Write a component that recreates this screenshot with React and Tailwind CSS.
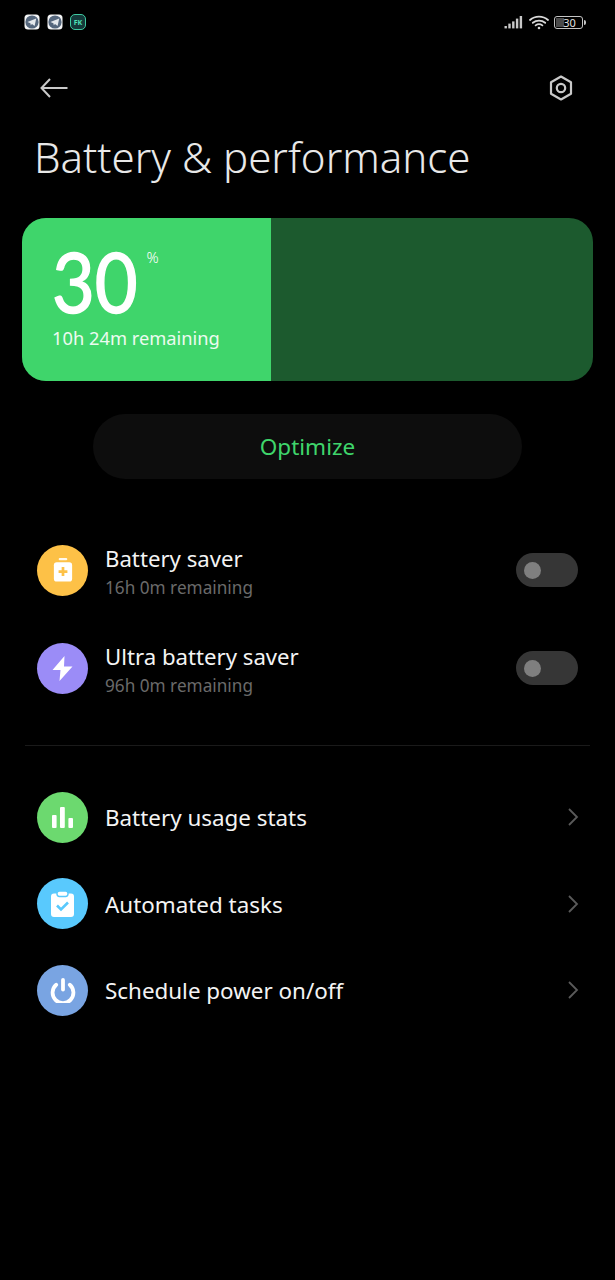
import React from 'react';

// App icons in the status bar
function TelegramNotif() {
    return (
        <svg width="16" height="16" viewBox="0 0 16 16">
            <rect x="0.5" y="0.5" width="15" height="15" rx="3.5" fill="#f4f5f6" />
            <circle cx="8" cy="8" r="6.6" fill="#55677d" />
            <path d="M3.4 8 L12.2 4.4 L10.6 12 L8 10 L6.8 11.2 L6.4 9.2 Z" fill="#e4e8ec" />
        </svg>
    );
}

function FkNotif() {
    return (
        <div className="w-4 h-4 rounded-[5px] border border-[#3fc9a0] bg-[#15393a] flex items-center justify-center">
            <span className="text-[7px] leading-none font-bold text-[#4fe0b5]">FK</span>
        </div>
    );
}

function Signal() {
    return (
        <svg width="20" height="14" viewBox="0 0 20 14" fill="#c8c8c8">
            <rect x="0.5" y="11" width="2.4" height="2.4" />
            <rect x="4.3" y="8.6" width="2.4" height="4.8" />
            <rect x="8.1" y="6.4" width="2.4" height="7" />
            <rect x="11.9" y="3.6" width="2.4" height="9.8" />
            <rect x="15.7" y="1" width="2.4" height="12.4" />
        </svg>
    );
}

function Wifi() {
    return (
        <svg width="20" height="15" viewBox="0 0 20 15" fill="none" stroke="#d8d8d8" strokeWidth="1.8" strokeLinecap="round">
            <path d="M1 5 C6 0.6 14 0.6 19 5" />
            <path d="M3.8 7.8 C7.4 4.8 12.6 4.8 16.2 7.8" />
            <path d="M6.6 10.4 C8.6 8.9 11.4 8.9 13.4 10.4" />
            <circle cx="10" cy="13" r="1.3" fill="#d8d8d8" stroke="none" />
        </svg>
    );
}

function BatteryStatus() {
    return (
        <div className="flex items-center gap-[1px]">
            <div className="relative w-[29px] h-[13px] rounded-[3px] border border-[#c4c4c4] overflow-hidden flex items-center justify-center">
                <div className="absolute left-[1px] top-[1px] bottom-[1px] w-[8px] bg-[#4a4a4a]" />
                <span className="relative left-[1px] text-[11px] leading-none text-[#e0e0e0]">30</span>
            </div>
            <div className="w-[2px] h-[5px] rounded-r-sm bg-[#c4c4c4]" />
        </div>
    );
}

function RoundIcon({ color, children }) {
    return (
        <div className={`w-[51px] h-[51px] rounded-full shrink-0 flex items-center justify-center ${color}`}>
            {children}
        </div>
    );
}

function Toggle() {
    return (
        <div className="w-[62px] h-[34px] rounded-full bg-[#363636] flex items-center pl-[8px] shrink-0">
            <div className="w-[17px] h-[17px] rounded-full bg-[#7f7f7f]" />
        </div>
    );
}

function SaverRow({ color, icon, title, sub }) {
    return (
        <div className="h-[98px] flex items-center pl-[37px] pr-[37px]">
            <RoundIcon color={color}>{icon}</RoundIcon>
            <div className="ml-[17px] flex-1 pt-[8px]">
                <div className="text-[22.2px] leading-[27px] text-[#f4f4f4]">{title}</div>
                <div className="text-[17.2px] leading-[32px] text-[#6a6a6a]">{sub}</div>
            </div>
            <Toggle />
        </div>
    );
}

function LinkRow({ color, icon, title }) {
    return (
        <div className="h-[86.5px] flex items-center pl-[37px] pr-[35px]">
            <RoundIcon color={color}>{icon}</RoundIcon>
            <div className="ml-[17px] flex-1 pt-[2px] text-[22.4px] text-[#f4f4f4]">{title}</div>
            <svg width="14" height="20" viewBox="0 0 14 20" fill="none" stroke="#5a5a5a" strokeWidth="1.8">
                <path d="M3 2 L11 10 L3 18" />
            </svg>
        </div>
    );
}

const saverIcon = (
    <svg width="20" height="24" viewBox="0 0 20 25">
        <rect x="5.5" y="0" width="9" height="2.4" rx="1.2" fill="#fff" opacity="0.9" />
        <rect x="0.5" y="4.5" width="19" height="20" rx="3" fill="#fff" />
        <path d="M8.6 9.5 h2.8 v3.2 h3.2 v2.8 h-3.2 v3.2 h-2.8 v-3.2 h-3.2 v-2.8 h3.2 z" fill="#fdc147" />
    </svg>
);

const boltIcon = (
    <svg width="21" height="25" viewBox="0 0 21 25">
        <path d="M12.5 0 L0.5 14 H8.5 L7.5 25 L20.5 10.5 H12 Z" fill="#fff" />
    </svg>
);

const statsIcon = (
    <svg width="21" height="21" viewBox="0 0 21 21" fill="#fff">
        <rect x="0" y="8" width="4.6" height="13" rx="1" />
        <rect x="8" y="0" width="4.8" height="21" rx="1" />
        <rect x="16.4" y="11" width="4.6" height="10" rx="1" />
    </svg>
);

const clipboardIcon = (
    <svg width="23" height="26" viewBox="0 0 23 26">
        <path d="M3 2.5 H20 A3 3 0 0 1 23 5.5 V23 A3 3 0 0 1 20 26 H3 A3 3 0 0 1 0 23 V5.5 A3 3 0 0 1 3 2.5 Z" fill="#fff" />
        <rect x="6" y="0" width="11" height="5.5" rx="2.4" fill="#fff" stroke="#59c9fd" strokeWidth="1.4" />
        <path d="M6 14.5 L10 18.5 L17 11.5" fill="none" stroke="#59c9fd" strokeWidth="2.6" />
    </svg>
);

const powerIcon = (
    <svg width="26" height="25" viewBox="0 0 26 25" fill="none" stroke="#fff" strokeWidth="3.8">
        <path d="M6.2 6.8 A10.4 10.4 0 1 0 19.8 6.8" strokeLinecap="round" />
        <path d="M13 2 V11.5" strokeLinecap="round" />
    </svg>
);

export default function App() {
    return (
        <div className="w-[615px] h-[1280px] bg-black overflow-hidden font-['Noto_Sans',sans-serif]">
            {/* status bar */}
            <div className="h-[44px] flex items-center justify-between pl-[24px] pr-[29px]">
                <div className="flex items-center gap-[7px]">
                    <TelegramNotif />
                    <TelegramNotif />
                    <FkNotif />
                </div>
                <div className="flex items-center gap-[5px]">
                    <Signal />
                    <Wifi />
                    <BatteryStatus />
                </div>
            </div>

            {/* header */}
            <div className="h-[88px] flex items-center justify-between pl-[40px] pr-[42px]">
                <svg width="28" height="20" viewBox="0 0 28 20" fill="none" stroke="#c9c9c9" strokeWidth="2">
                    <path d="M27.5 10 H1.5" />
                    <path d="M10 1 L1.5 10 L10 19" />
                </svg>
                <svg width="24" height="26" viewBox="0 0 24 26" fill="none" stroke="#c9c9c9" strokeWidth="2.2" strokeLinejoin="round">
                    <path d="M12 1.5 L22 7.2 V18.8 L12 24.5 L2 18.8 V7.2 Z" />
                    <circle cx="12" cy="13" r="4.2" />
                </svg>
            </div>

            <h1 className="pl-[34px] h-[86px] text-[42px] leading-[50px] font-light text-[#e8e8e8]">
                Battery &amp; performance
            </h1>

            {/* battery card */}
            <div className="mx-[22px] h-[163px] rounded-[24px] overflow-hidden flex bg-[#1c5a2e]">
                <div className="w-[249px] bg-[#3fd56b] pl-[30px] pt-[21px]">
                    <div className="flex items-start">
                        <span className="inline-block origin-left scale-x-[0.88] text-[84px] leading-[84px] font-['Lato',sans-serif] [-webkit-text-stroke:1.5px_white] text-white">30</span>
                        <span className="ml-[-3px] mt-[8px] text-[15px] leading-[20px] font-light text-white">%</span>
                    </div>
                    <div className="mt-[3px] text-[18.3px] leading-[24px] text-[#ecfbf0]">10h 24m remaining</div>
                </div>
                <div className="flex-1" />
            </div>

            {/* optimize */}
            <div className="mt-[33px] mx-[93px] h-[65px] rounded-full bg-[#0d0d0d] flex items-center justify-center text-[22.5px] text-[#3fd56b]">
                Optimize
            </div>

            <div className="mt-[42px]">
                <SaverRow color="bg-[#fdc147]" icon={saverIcon} title="Battery saver" sub="16h 0m remaining" />
                <SaverRow color="bg-[#9b8cf7]" icon={boltIcon} title="Ultra battery saver" sub="96h 0m remaining" />
            </div>

            <div className="mt-[28px] mx-[25px] h-px bg-[#1a1a1a]" />

            <div className="mt-[28px]">
                <LinkRow color="bg-[#6cd96f]" icon={statsIcon} title="Battery usage stats" />
                <LinkRow color="bg-[#59c9fd]" icon={clipboardIcon} title="Automated tasks" />
                <LinkRow color="bg-[#79a4e2]" icon={powerIcon} title="Schedule power on/off" />
            </div>
        </div>
    );
}
